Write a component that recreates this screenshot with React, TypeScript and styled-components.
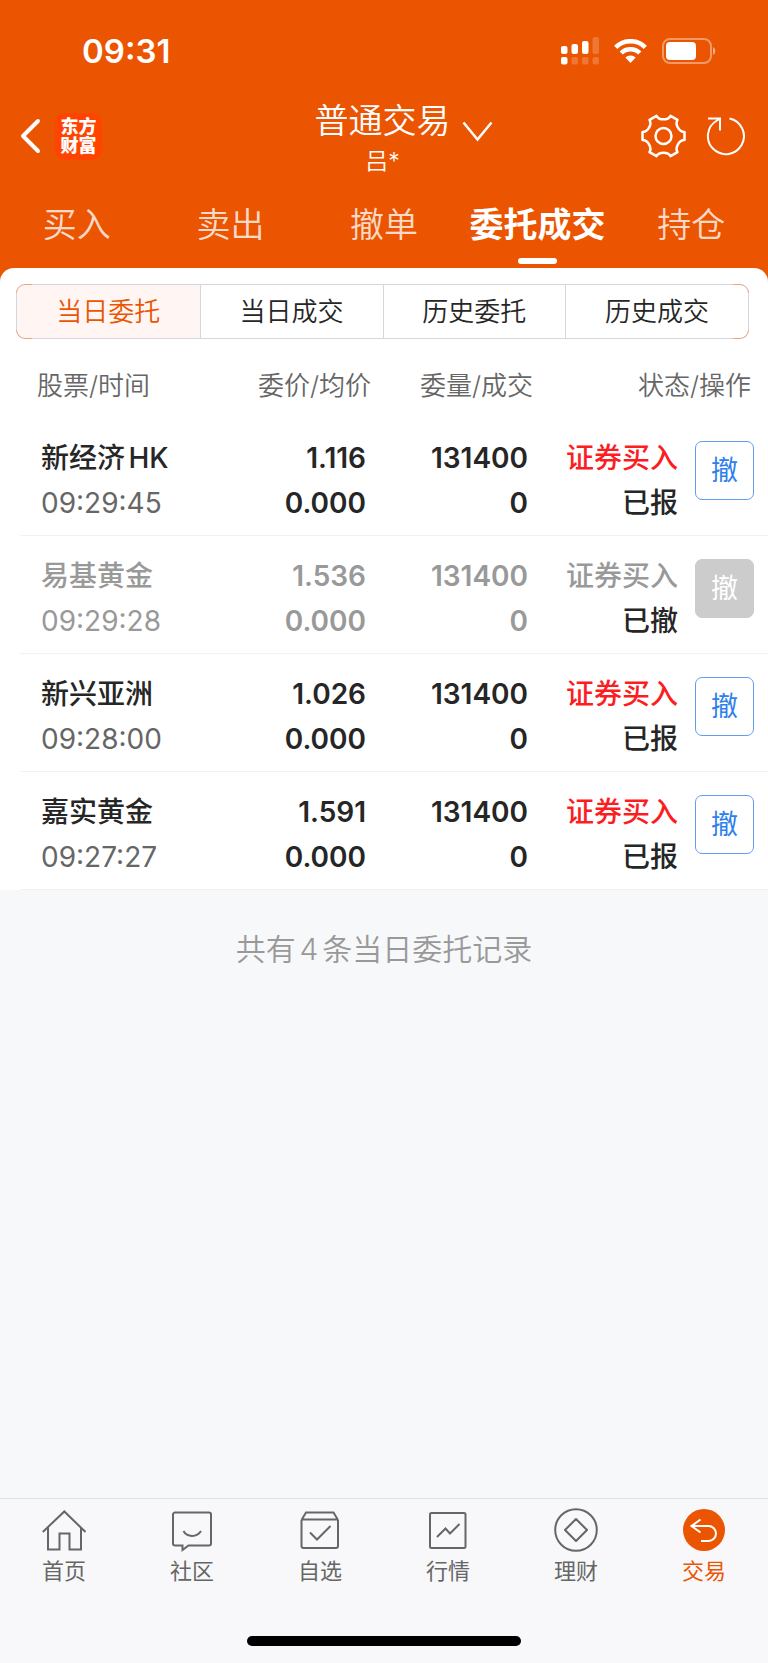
import React from "react";
import styled, { createGlobalStyle, css } from "styled-components";

const ORANGE = "#eb5502";
const INK = "#262626";
const MUTED = "#666666";
const FADED = "#999999";

const GlobalStyle = createGlobalStyle`
  *, *::before, *::after { box-sizing: border-box; }
  body {
    margin: 0;
    font-family: Inter, "Noto Sans CJK SC", sans-serif;
    color: ${INK};
    text-autospace: normal;
  }
  button {
    font: inherit;
    color: inherit;
    background: none;
    border: 0;
    padding: 0;
    cursor: pointer;
  }
  a { color: inherit; text-decoration: none; }
  svg { display: block; flex: none; }
`;

const Page = styled.div`
  display: flex;
  flex-direction: column;
  min-height: 100vh;
  background: #f7f8fa;
`;

const Header = styled.header`
  background: ${ORANGE};
  color: #fff;
  padding-bottom: 14px;
  margin-bottom: -14px;
`;

const StatusBar = styled.div`
  display: flex;
  align-items: center;
  justify-content: space-between;
  height: 91px;
  padding: 11px 51px 0 82px;
`;

const Clock = styled.time`
  font-size: 33px;
  line-height: 40px;
  font-weight: 600;
`;

const StatusIcons = styled.div`
  display: flex;
  align-items: center;
  gap: 15px;
`;

const TitleBar = styled.div`
  display: grid;
  grid-template-columns: 1fr auto 1fr;
  align-items: center;
  height: 90px;
  padding: 0 23px 0 20px;
`;

const BackLink = styled.a`
  display: flex;
  align-items: center;
  gap: 14px;
`;

const Brand = styled.span`
  display: flex;
  align-items: center;
  justify-content: center;
  width: 47px;
  height: 47px;
  border-radius: 10px;
  background: #ff4400;
  font-size: 18px;
  line-height: 19px;
  font-weight: 900;
  text-align: center;
`;

const AccountButton = styled.button`
  position: relative;
  display: flex;
  flex-direction: column;
  align-items: center;
  padding-top: 10px;
`;

const AccountType = styled.span`
  font-size: 34px;
  line-height: 40px;
  font-weight: 350;
`;

const AccountName = styled.span`
  font-size: 23px;
  line-height: 40px;
  font-weight: 350;
`;

const Chevron = styled.svg`
  position: absolute;
  left: calc(100% + 11px);
  top: 30px;
`;

const Tools = styled.div`
  display: flex;
  align-items: center;
  justify-content: flex-end;
  gap: 19px;
`;

const Tabs = styled.nav`
  display: grid;
  grid-template-columns: repeat(5, 1fr);
  height: 87px;
`;

const Tab = styled.a<{ $active?: boolean }>`
  display: flex;
  flex-direction: column;
  align-items: center;
  padding-top: 24px;
  font-size: 34px;
  line-height: 40px;
  font-weight: 350;
  white-space: nowrap;
  color: rgba(255, 255, 255, 0.8);
  ${(p) =>
    p.$active &&
    css`
      color: #fff;
      font-weight: 600;
      &::after {
        content: "";
        width: 39px;
        height: 6px;
        margin-top: 13px;
        border-radius: 3px;
        background: #fff;
      }
    `}
`;

const Sheet = styled.main`
  background: #fff;
  border-radius: 14px 14px 0 0;
  padding-top: 16px;
`;

const Segments = styled.div`
  position: relative;
  display: grid;
  grid-template-columns: repeat(4, 1fr);
  height: 55px;
  margin: 0 19px 0 16px;
  border: 1px solid #d5d7dd;
  border-radius: 9px;
  &::before,
  &::after {
    content: "";
    position: absolute;
    top: -1px;
    bottom: -1px;
    width: 16px;
    border: 1px solid #f0a27c;
    pointer-events: none;
    mask-image: linear-gradient(#000 9px, transparent 9px calc(100% - 9px), #000 calc(100% - 9px));
  }
  &::before {
    left: -1px;
    border-right: 0;
    border-radius: 9px 0 0 9px;
  }
  &::after {
    right: -1px;
    border-left: 0;
    border-radius: 0 9px 9px 0;
  }
`;

const Segment = styled.button<{ $active?: boolean }>`
  font-size: 26px;
  line-height: 40px;
  font-weight: 350;
  color: ${(p) => (p.$active ? ORANGE : INK)};
  background: ${(p) => (p.$active ? "#fff5f2" : "transparent")};
  &:first-child { border-radius: 8px 0 0 8px; }
  & + & { border-left: 1px solid #d5d7dd; }
`;

const Orders = styled.table`
  width: calc(100% - 20px);
  margin-left: 20px;
  border-collapse: separate;
  border-spacing: 0;
  table-layout: fixed;
  text-align: right;
  white-space: nowrap;
`;

const Col = styled.col<{ $width?: number }>`
  width: ${(p) => (p.$width ? `${p.$width}px` : "auto")};
`;

const HeadCell = styled.th<{ $first?: boolean; $last?: boolean }>`
  height: 79px;
  padding: 14px ${(p) => (p.$last ? 17 : 0)}px 0 ${(p) => (p.$first ? 17 : 0)}px;
  font-size: 26px;
  line-height: 36px;
  font-weight: 350;
  color: ${MUTED};
  text-align: ${(p) => (p.$first ? "left" : "right")};
`;

const Cell = styled.td<{ $first?: boolean }>`
  height: 118px;
  padding: 18px 5px 8px ${(p) => (p.$first ? 21 : 0)}px;
  border-bottom: 1px solid #f2f2f4;
  vertical-align: top;
  text-align: ${(p) => (p.$first ? "left" : "right")};
`;

const ActionCell = styled(Cell)`
  padding: 23px 14px 0 0;
`;

const Line = styled.div<{ $color?: string; $weight?: number }>`
  font-size: 28px;
  line-height: 45px;
  font-weight: ${(p) => p.$weight ?? 600};
  color: ${(p) => p.$color ?? INK};
`;

const CancelButton = styled.button`
  width: 59px;
  height: 59px;
  border: 1px solid #5f9df2;
  border-radius: 7px;
  font-size: 27px;
  line-height: 40px;
  font-weight: 400;
  color: #2f7fec;
  &:disabled {
    border-color: #cccccc;
    background: #cccccc;
    color: #fff;
  }
`;

const Summary = styled.p`
  flex: 1;
  margin: 0;
  padding-top: 38px;
  font-size: 30px;
  line-height: 42px;
  font-weight: 350;
  color: ${FADED};
  text-align: center;
`;

const BottomBar = styled.footer`
  display: flex;
  flex-direction: column;
  align-items: center;
  border-top: 1px solid #e1e2e5;
  background: #f8f8fa;
  padding-bottom: 17px;
`;

const BottomNav = styled.nav`
  display: grid;
  grid-template-columns: repeat(6, 1fr);
  width: 100%;
  height: 137px;
`;

const NavItem = styled.a<{ $active?: boolean }>`
  display: flex;
  flex-direction: column;
  align-items: center;
  padding-top: 9px;
  gap: 3px;
  font-size: 22px;
  line-height: 32px;
  color: ${(p) => (p.$active ? ORANGE : MUTED)};
`;

const HomeIndicator = styled.div`
  width: 274px;
  height: 10px;
  border-radius: 5px;
  background: #000;
`;

const NavIcon = ({ children }: { children: React.ReactNode }) => (
  <svg width="44" height="44" viewBox="0 -2 44 44" fill="none" stroke="currentColor" strokeWidth="2" aria-hidden="true">
    {children}
  </svg>
);

const navItems = [
  {
    label: "首页",
    icon: (
      <NavIcon>
        <path d="M.8 22 22.3 1.5 43.5 22M6 17.5V39.500h11.500V23.500h10V39.500h11.500V17.500" />
      </NavIcon>
    ),
  },
  {
    label: "社区",
    icon: (
      <NavIcon>
        <path d="M5 2.500h34a2 2 0 0 1 2 2v29a2 2 0 0 1-2 2H18.500L12.500 40v-4.500H5a2 2 0 0 1-2-2v-29a2 2 0 0 1 2-2Z" />
        <path d="M13.500 21c3.500 6.500 13.500 6.500 17.500 0" />
      </NavIcon>
    ),
  },
  {
    label: "自选",
    icon: (
      <NavIcon>
        <path d="M3.500 10 8 2.500h27.500l4.500 7.500M3.500 10v26a2 2 0 0 0 2 2h32.500a2 2 0 0 0 2-2V10M3.500 9.500H40M12 22.500l7 7 13.500-13.500" />
      </NavIcon>
    ),
  },
  {
    label: "行情",
    icon: (
      <NavIcon>
        <rect x="4" y="3" width="35.500" height="35" rx="1.500" />
        <path d="m11 27 8.500-8.500 4.500 5 9.500-9.500" />
      </NavIcon>
    ),
  },
  {
    label: "理财",
    icon: (
      <NavIcon>
        <circle cx="22" cy="20" r="20.800" />
        <path d="M22 9 33 20 22 31 11 20Z" strokeLinejoin="round" />
      </NavIcon>
    ),
  },
  {
    label: "交易",
    active: true,
    icon: (
      <NavIcon>
        <circle cx="22" cy="20" r="21" fill="currentColor" stroke="none" />
        <path d="m18.500 9.500-9 6.500 9 6.500M10 16h16.500a7.500 7.500 0 0 1 0 15H19" stroke="#fff" />
      </NavIcon>
    ),
  },
];

const tabs = ["买入", "卖出", "撤单", "委托成交", "持仓"];
const segments = ["当日委托", "当日成交", "历史委托", "历史成交"];

const orders = [
  { name: "新经济HK", time: "09:29:45", price: "1.116", status: "已报", cancelled: false },
  { name: "易基黄金", time: "09:29:28", price: "1.536", status: "已撤", cancelled: true },
  { name: "新兴亚洲", time: "09:28:00", price: "1.026", status: "已报", cancelled: false },
  { name: "嘉实黄金", time: "09:27:27", price: "1.591", status: "已报", cancelled: false },
];

const Signal = () => (
  <svg width="38" height="28" viewBox="0 0 38 28" fill="#fff" aria-hidden="true">
    <rect x="0" y="9" width="6.500" height="8" rx="2" />
    <rect x="10.500" y="7" width="6.500" height="10" rx="2" />
    <rect x="21" y="4" width="6.500" height="13" rx="2" />
    <rect x="31.500" y="0" width="6.500" height="17" rx="2" opacity=".2" />
    <rect x="0" y="20" width="6.500" height="7.500" rx="2" />
    <rect x="10.500" y="20" width="6.500" height="7.500" rx="2" opacity=".2" />
    <rect x="21" y="20" width="6.500" height="7.500" rx="2" opacity=".2" />
    <rect x="31.500" y="20" width="6.500" height="7.500" rx="2" opacity=".2" />
  </svg>
);

const Wifi = () => (
  <svg width="33" height="24" viewBox="0 0 33 24" fill="none" stroke="#fff" strokeWidth="4.500" aria-hidden="true">
    <path d="M1.700 8.300a21 21 0 0 1 29.600 0" />
    <path d="M7.200 14a13.200 13.200 0 0 1 18.600 0" />
    <path d="M11.300 18.600a7.500 7.500 0 0 1 10.400 0L16.500 24Z" fill="#fff" stroke="none" />
  </svg>
);

const Battery = () => (
  <svg width="55" height="26" viewBox="0 0 55 26" aria-hidden="true">
    <rect x="1" y="1" width="48" height="24" rx="7" fill="none" stroke="#fff" strokeWidth="2" opacity=".4" />
    <rect x="4" y="4" width="30" height="18" rx="4" fill="#fff" />
    <path d="M51 9v8c3-1.500 3-6.500 0-8Z" fill="#fff" opacity=".5" />
  </svg>
);

export default function App() {
  return (
    <Page lang="zh-CN">
      <GlobalStyle />
      <Header>
        <StatusBar>
          <Clock>09:31</Clock>
          <StatusIcons>
            <Signal />
            <Wifi />
            <Battery />
          </StatusIcons>
        </StatusBar>
        <TitleBar>
          <BackLink href="#back" aria-label="返回">
            <svg width="21" height="36" viewBox="0 0 21 36" fill="none" stroke="#fff" strokeWidth="4" strokeLinecap="round" strokeLinejoin="round" aria-hidden="true">
              <path d="M18 3 3 18l15 15" />
            </svg>
            <Brand>
              东方
              <br />
              财富
            </Brand>
          </BackLink>
          <AccountButton>
            <AccountType>普通交易</AccountType>
            <AccountName>吕*</AccountName>
            <Chevron width="32" height="22" viewBox="0 0 32 22" fill="none" stroke="#fff" strokeWidth="2.500" aria-hidden="true">
              <path d="m1.500 1.500 14 17 14-17" />
            </Chevron>
          </AccountButton>
          <Tools>
            <button aria-label="设置">
              <svg width="45" height="44" viewBox="0 0 45 44" fill="none" stroke="#fff" strokeWidth="2.500" strokeLinejoin="round" aria-hidden="true">
                <path d="M15.500 1.800C18 6.500 27 6.500 29.500 1.800L36.500 5.800C33.700 10.400 38.200 18.100 43.500 18V26C38.200 25.900 33.700 33.600 36.500 38.200L29.500 42.200C27 37.500 18 37.500 15.500 42.200L8.500 38.200C11.300 33.600 6.800 25.900 1.500 26V18C6.800 18.100 11.300 10.400 8.500 5.800Z" />
                <circle cx="22.500" cy="22" r="8" />
              </svg>
            </button>
            <button aria-label="刷新">
              <svg width="40" height="40" viewBox="0 0 40 40" fill="none" stroke="#fff" strokeWidth="2" aria-hidden="true">
                <path d="M24.500 2.500A18 18 0 1 1 12 4.500L15 2.500M3 2.500h12v12" />
              </svg>
            </button>
          </Tools>
        </TitleBar>
        <Tabs>
          {tabs.map((t) => (
            <Tab key={t} href="#" $active={t === "委托成交"}>
              {t}
            </Tab>
          ))}
        </Tabs>
      </Header>
      <Sheet>
        <Segments>
          {segments.map((s, i) => (
            <Segment key={s} $active={i === 0}>
              {s}
            </Segment>
          ))}
        </Segments>
        <Orders>
          <colgroup>
            <Col />
            <Col $width={151} />
            <Col $width={162} />
            <Col $width={150} />
            <Col $width={85} />
          </colgroup>
          <thead>
            <tr>
              <HeadCell $first>股票/时间</HeadCell>
              <HeadCell>委价/均价</HeadCell>
              <HeadCell>委量/成交</HeadCell>
              <HeadCell $last colSpan={2}>状态/操作</HeadCell>
            </tr>
          </thead>
          <tbody>
            {orders.map((o) => {
              const tone = o.cancelled ? FADED : INK;
              return (
                <tr key={o.time}>
                  <Cell $first>
                    <Line $weight={500} $color={tone}>{o.name}</Line>
                    <Line $weight={400} $color={o.cancelled ? FADED : MUTED}>{o.time}</Line>
                  </Cell>
                  <Cell>
                    <Line $color={tone}>{o.price}</Line>
                    <Line $color={tone}>0.000</Line>
                  </Cell>
                  <Cell>
                    <Line $color={tone}>131400</Line>
                    <Line $color={tone}>0</Line>
                  </Cell>
                  <Cell>
                    <Line $weight={500} $color={o.cancelled ? FADED : "#fc1d22"}>证券买入</Line>
                    <Line $weight={500}>{o.status}</Line>
                  </Cell>
                  <ActionCell>
                    <CancelButton disabled={o.cancelled}>撤</CancelButton>
                  </ActionCell>
                </tr>
              );
            })}
          </tbody>
        </Orders>
      </Sheet>
      <Summary>共有4条当日委托记录</Summary>
      <BottomBar>
        <BottomNav>
          {navItems.map((n) => (
            <NavItem key={n.label} href="#" $active={n.active}>
              {n.icon}
              {n.label}
            </NavItem>
          ))}
        </BottomNav>
        <HomeIndicator />
      </BottomBar>
    </Page>
  );
}
